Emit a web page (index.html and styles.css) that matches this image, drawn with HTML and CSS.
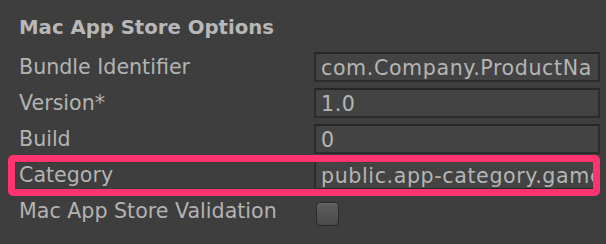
FILE: index.html
```html
<!DOCTYPE html>
<html>
<head>
<meta charset="utf-8">
<link rel="stylesheet" href="styles.css">
</head>
<body>
<div class="panel">
  <div class="title">Mac App Store Options</div>
  <div class="rows">
    <div class="row">
      <div class="label">Bundle Identifier</div>
      <div class="field"><span class="value">com.Company.ProductName</span></div>
    </div>
    <div class="row">
      <div class="label">Version*</div>
      <div class="field"><span class="value">1.0</span></div>
    </div>
    <div class="row">
      <div class="label">Build</div>
      <div class="field"><span class="value">0</span></div>
    </div>
    <div class="row highlighted">
      <div class="label">Category</div>
      <div class="field"><span class="value">public.app-category.games</span></div>
    </div>
    <div class="row">
      <div class="label">Mac App Store Validation</div>
      <div class="check-wrap"><span class="checkbox"></span></div>
    </div>
  </div>
</div>
</body>
</html>
```
FILE: styles.css
```css
html, body {
  margin: 0;
  padding: 0;
  background: #3e3e3e;
  width: 606px;
  height: 244px;
  overflow: hidden;
}
.panel {
  padding: 13px 6px 0 19px;
  font-family: "DejaVu Sans", "Liberation Sans", sans-serif;
  font-size: 20.6px;
  color: #b3b3b3;
}
.title {
  font-weight: bold;
  font-size: 19.7px;
  line-height: 30px;
  height: 30px;
  margin-bottom: 9px;
  color: #b8b8b8;
}
.rows {
  display: flex;
  flex-direction: column;
  gap: 6px;
}
.row {
  display: flex;
  align-items: center;
  height: 30px;
  position: relative;
}
.label {
  width: 295px;
  flex: none;
  line-height: 30px;
  white-space: nowrap;
}
.field {
  flex: 1;
  min-width: 0;
  height: 30px;
  box-sizing: border-box;
  border: 2px solid #2c2c2c;
  border-top-color: #262626;
  background: #434343;
  padding: 1px 5px 0 5px;
  color: #b5b5b5;
}
.value {
  display: block;
  line-height: 26px;
  letter-spacing: 0.6px;
  white-space: nowrap;
  overflow: hidden;
}
.check-wrap {
  flex: 1;
  display: flex;
  align-items: center;
  padding-left: 2px;
  padding-top: 5px;
}
.checkbox {
  display: block;
  width: 21px;
  height: 22px;
  border-radius: 4px;
  border: 1px solid #2a2a2a;
  background: linear-gradient(#5e5e5e, #4a4a4a);
  box-shadow: inset 0 1px 0 #6a6a6a;
}
.highlighted::after {
  content: "";
  position: absolute;
  left: -11px;
  right: 0;
  top: -5px;
  bottom: -6px;
  border: 7px solid #ff3370;
  border-radius: 5px;
  pointer-events: none;
}
```
